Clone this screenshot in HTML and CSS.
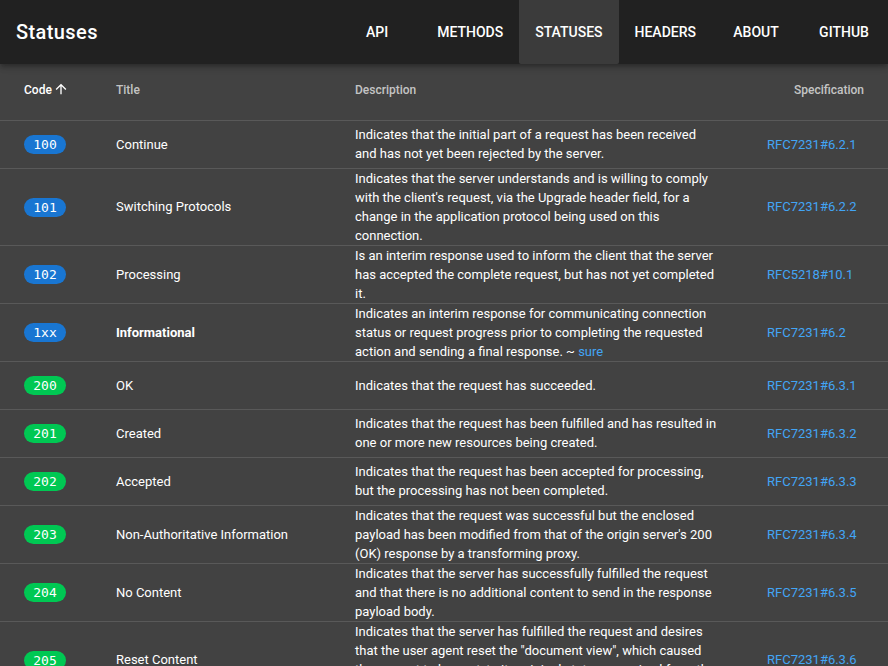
FILE: index.html
```html
<!DOCTYPE html>
<html lang="en">
<head>
<meta charset="utf-8">
<title>Statuses</title>
<link rel="stylesheet" href="styles.css">
</head>
<body>
<header class="toolbar">
  <div class="brand">Statuses</div>
  <nav class="nav">
    <a class="nav-btn">API</a>
    <a class="nav-btn">Methods</a>
    <a class="nav-btn active">Statuses</a>
    <a class="nav-btn">Headers</a>
    <a class="nav-btn">About</a>
    <a class="nav-btn">GitHub</a>
  </nav>
</header>
<main class="content">
  <table class="table">
    <colgroup>
      <col class="c-code"><col class="c-title"><col class="c-desc"><col class="c-spec">
    </colgroup>
    <thead>
      <tr>
        <th class="sorted">Code <svg class="arrow" viewBox="0 0 24 24" width="16" height="16"><path d="M4 12l1.41 1.41L11 7.83V20h2V7.83l5.58 5.59L20 12l-8-8-8 8z" fill="currentColor"/></svg></th>
        <th>Title</th>
        <th>Description</th>
        <th class="right">Specification</th>
      </tr>
    </thead>
    <tbody>
      <tr>
        <td><span class="chip info">100</span></td>
        <td>Continue</td>
        <td>Indicates that the initial part of a request has been received and has not yet been rejected by the server.</td>
        <td><a class="link">RFC7231#6.2.1</a></td>
      </tr>
      <tr>
        <td><span class="chip info">101</span></td>
        <td>Switching Protocols</td>
        <td>Indicates that the server understands and is willing to comply with the client's request, via the Upgrade header field, for a change in the application protocol being used on this connection.</td>
        <td><a class="link">RFC7231#6.2.2</a></td>
      </tr>
      <tr>
        <td><span class="chip info">102</span></td>
        <td>Processing</td>
        <td>Is an interim response used to inform the client that the server has accepted the complete request, but has not yet completed it.</td>
        <td><a class="link">RFC5218#10.1</a></td>
      </tr>
      <tr>
        <td><span class="chip info">1xx</span></td>
        <td class="strong">Informational</td>
        <td>Indicates an interim response for communicating connection status or request progress prior to completing the requested action and sending a final response. ~ <a class="link">sure</a></td>
        <td><a class="link">RFC7231#6.2</a></td>
      </tr>
      <tr>
        <td><span class="chip ok">200</span></td>
        <td>OK</td>
        <td>Indicates that the request has succeeded.</td>
        <td><a class="link">RFC7231#6.3.1</a></td>
      </tr>
      <tr>
        <td><span class="chip ok">201</span></td>
        <td>Created</td>
        <td>Indicates that the request has been fulfilled and has resulted in one or more new resources being created.</td>
        <td><a class="link">RFC7231#6.3.2</a></td>
      </tr>
      <tr>
        <td><span class="chip ok">202</span></td>
        <td>Accepted</td>
        <td>Indicates that the request has been accepted for processing, but the processing has not been completed.</td>
        <td><a class="link">RFC7231#6.3.3</a></td>
      </tr>
      <tr>
        <td><span class="chip ok">203</span></td>
        <td>Non-Authoritative Information</td>
        <td>Indicates that the request was successful but the enclosed payload has been modified from that of the origin server's 200 (OK) response by a transforming proxy.</td>
        <td><a class="link">RFC7231#6.3.4</a></td>
      </tr>
      <tr>
        <td><span class="chip ok">204</span></td>
        <td>No Content</td>
        <td>Indicates that the server has successfully fulfilled the request and that there is no additional content to send in the response payload body.</td>
        <td><a class="link">RFC7231#6.3.5</a></td>
      </tr>
      <tr>
        <td><span class="chip ok">205</span></td>
        <td>Reset Content</td>
        <td>Indicates that the server has fulfilled the request and desires that the user agent reset the "document view", which caused the request to be sent, to its original state as received from the origin server.</td>
        <td><a class="link">RFC7231#6.3.6</a></td>
      </tr>
    </tbody>
  </table>
</main>
</body>
</html>
```
FILE: styles.css
```css
html, body {
  margin: 0;
  padding: 0;
  background: #424242;
  color: #fff;
  font-family: Roboto, "Liberation Sans", sans-serif;
}

.toolbar {
  position: relative;
  z-index: 2;
  height: 64px;
  background: #212121;
  display: flex;
  align-items: center;
  justify-content: space-between;
  padding-left: 16px;
  box-shadow: 0 2px 4px -1px rgba(0,0,0,0.2), 0 4px 5px 0 rgba(0,0,0,0.14), 0 1px 10px 0 rgba(0,0,0,0.12);
}

.brand {
  font-size: 20px;
  font-weight: 500;
  letter-spacing: 0.02em;
}

.nav {
  display: flex;
  height: 64px;
}

.nav-btn {
  min-width: 88px;
  box-sizing: border-box;
  padding: 0 16px;
  height: 64px;
  display: flex;
  align-items: center;
  justify-content: center;
  font-size: 14px;
  font-weight: 500;
  text-transform: uppercase;
  color: #fff;
  border-radius: 0 0 2px 2px;
}

.nav-btn.active {
  background: #3b3b3b;
}

.content {
  background: #424242;
}

.table {
  width: 100%;
  border-collapse: collapse;
  table-layout: fixed;
  font-size: 13px;
  line-height: 19px;
}

.c-code { width: 92px; }
.c-title { width: 239px; }
.c-desc { width: 412px; }
.c-spec { width: 145px; }

th {
  height: 56px;
  padding: 0 24px 2px;
  box-sizing: border-box;
  text-align: left;
  font-size: 12px;
  font-weight: 500;
  color: rgba(255,255,255,0.7);
  border-bottom: 1px solid rgba(255,255,255,0.12);
  white-space: nowrap;
}

th.sorted {
  color: #fff;
}

th.right {
  text-align: right;
}

.arrow {
  vertical-align: -3px;
  margin-left: -2px;
}

td {
  height: 47px;
  padding: 0 24px;
  vertical-align: middle;
  border-bottom: 1px solid rgba(255,255,255,0.12);
  color: #fff;
}

td.strong {
  font-weight: 700;
}

.chip {
  display: inline-flex;
  align-items: center;
  justify-content: center;
  width: 42px;
  height: 19px;
  border-radius: 10px;
  font-family: "DejaVu Sans Mono", "Liberation Mono", monospace;
  font-size: 13px;
  color: #fff;
  vertical-align: middle;
}

.chip.info { background: #1976d2; }
.chip.ok { background: #00c853; }

.link {
  color: #42a5f5;
  text-decoration: none;
}
```
